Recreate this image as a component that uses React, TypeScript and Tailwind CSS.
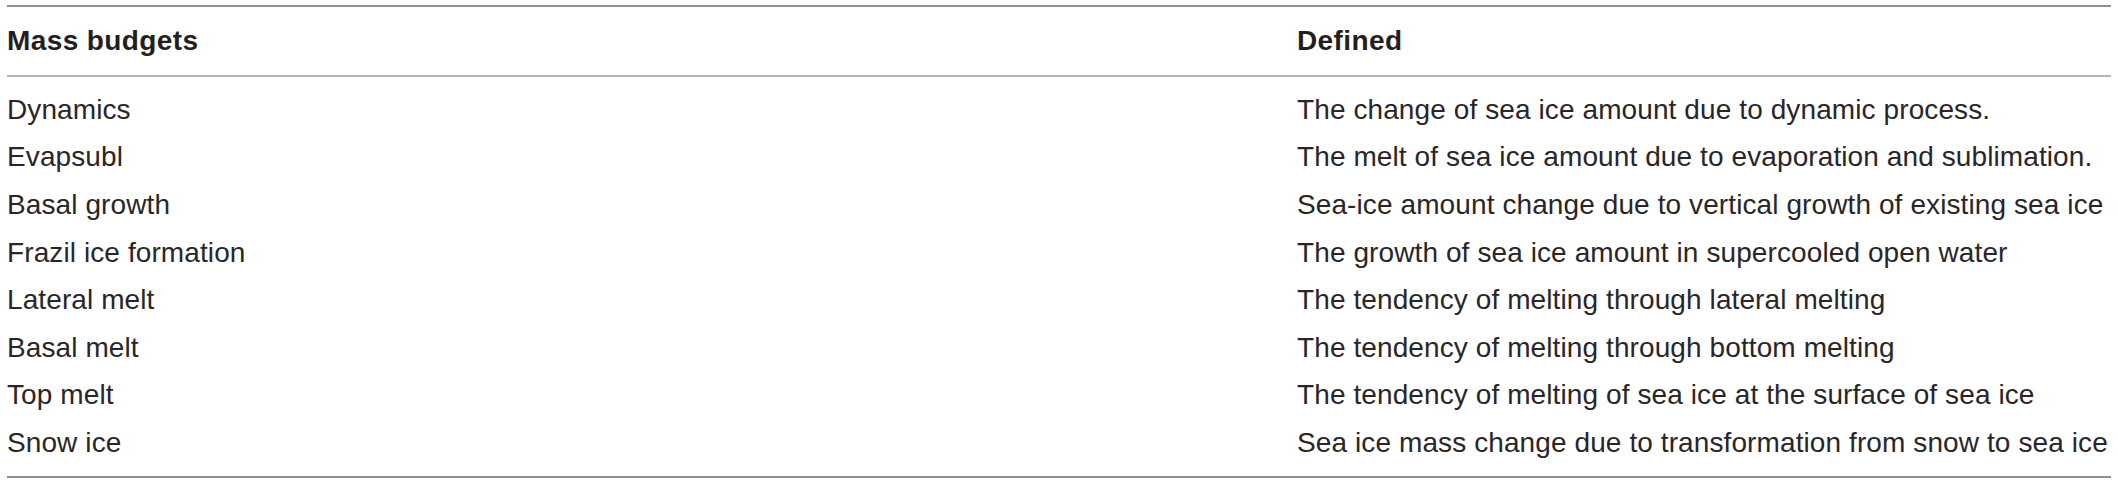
const rows = [
  ['Dynamics', 'The change of sea ice amount due to dynamic process.'],
  ['Evapsubl', 'The melt of sea ice amount due to evaporation and sublimation.'],
  ['Basal growth', 'Sea-ice amount change due to vertical growth of existing sea ice'],
  ['Frazil ice formation', 'The growth of sea ice amount in supercooled open water'],
  ['Lateral melt', 'The tendency of melting through lateral melting'],
  ['Basal melt', 'The tendency of melting through bottom melting'],
  ['Top melt', 'The tendency of melting of sea ice at the surface of sea ice'],
  ['Snow ice', 'Sea ice mass change due to transformation from snow to sea ice'],
];

export default function App() {
  return (
    <div className="w-[2118px] h-[485px] bg-white pt-[5px] px-[7px] font-['Liberation_Sans',Arial,sans-serif] text-[#231f20]">
      {/* header */}
      <div className="grid grid-cols-[1290px_1fr] h-[72px] items-center border-t-2 border-b-2 border-t-[#8f8f8f] border-b-[#b4b4b4] text-[28px] leading-none font-bold tracking-[0.4px]">
        <div>Mass budgets</div>
        <div>Defined</div>
      </div>

      {/* body */}
      <div className="py-[9px] border-b-2 border-[#8f8f8f]">
        {rows.map(([name, def]) => (
          <div key={name} className="grid grid-cols-[1290px_1fr] h-[47.6px] items-center text-[28px] leading-none tracking-[0.1px] text-[#2a2627]">
            <div>{name}</div>
            <div className="whitespace-nowrap">{def}</div>
          </div>
        ))}
      </div>
    </div>
  );
}
